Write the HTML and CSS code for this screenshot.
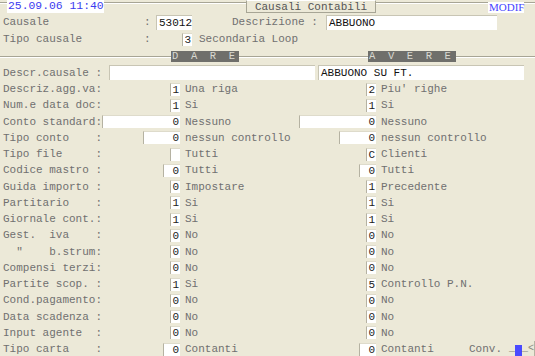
FILE: index.html
```html
<!DOCTYPE html>
<html lang="it">
<head>
  <meta charset="UTF-8" />
  <title>Causali Contabili</title>
  <link rel="stylesheet" href="styles.css">
</head>
<body>
  <div class="screen">
    <div class="topbar">
      <span class="clock">25.09.06 11:40</span>
      <span class="title">Causali Contabili</span>
      <span class="mode">MODIF</span>
    </div>

    <div class="head-row">
      <span class="hlabel">Causale</span>
      <span class="colon">:</span>
      <span class="field code">53012</span>
      <span class="hlabel desc-label">Descrizione :</span>
      <span class="field descr">ABBUONO</span>
    </div>
    <div class="head-row">
      <span class="hlabel">Tipo causale</span>
      <span class="colon">:</span>
      <span class="type-cell"><span class="box w1">3</span></span>
      <span class="text type-desc">Secondaria Loop</span>
    </div>

    <div class="section">
      <span class="tag dare">D  A  R  E</span>
      <span class="tag avere">A  V  E  R  E</span>
    </div>

    <div class="descr-row">
      <span class="label">Descr.causale :</span>
      <span class="field wide left"></span>
      <span class="field wide right">ABBUONO SU FT.</span>
    </div>

    <div class="row">
      <div class="col-a"><span class="label">Descriz.agg.va:</span><span class="box w1">1</span></div>
      <div class="col-b"><span class="text">Una riga</span><span class="box w1">2</span></div>
      <div class="col-c"><span class="text">Piu' righe</span></div>
    </div>
    <div class="row">
      <div class="col-a"><span class="label">Num.e data doc:</span><span class="box w1">1</span></div>
      <div class="col-b"><span class="text">Si</span><span class="box w1">1</span></div>
      <div class="col-c"><span class="text">Si</span></div>
    </div>
    <div class="row">
      <div class="col-a"><span class="label">Conto standard:</span><span class="box w-conto">0</span></div>
      <div class="col-b"><span class="text">Nessuno</span><span class="box w-conto-r">0</span></div>
      <div class="col-c"><span class="text">Nessuno</span></div>
    </div>
    <div class="row">
      <div class="col-a"><span class="label">Tipo conto    :</span><span class="box w-tipo">0</span></div>
      <div class="col-b"><span class="text">nessun controllo</span><span class="box w-tipo">0</span></div>
      <div class="col-c"><span class="text">nessun controllo</span></div>
    </div>
    <div class="row">
      <div class="col-a"><span class="label">Tipo file     :</span><span class="box w1"></span></div>
      <div class="col-b"><span class="text">Tutti</span><span class="box w1">C</span></div>
      <div class="col-c"><span class="text">Clienti</span></div>
    </div>
    <div class="row">
      <div class="col-a"><span class="label">Codice mastro :</span><span class="box w2">0</span></div>
      <div class="col-b"><span class="text">Tutti</span><span class="box w2">0</span></div>
      <div class="col-c"><span class="text">Tutti</span></div>
    </div>
    <div class="row">
      <div class="col-a"><span class="label">Guida importo :</span><span class="box w1">0</span></div>
      <div class="col-b"><span class="text">Impostare</span><span class="box w1">1</span></div>
      <div class="col-c"><span class="text">Precedente</span></div>
    </div>
    <div class="row">
      <div class="col-a"><span class="label">Partitario    :</span><span class="box w1">1</span></div>
      <div class="col-b"><span class="text">Si</span><span class="box w1">1</span></div>
      <div class="col-c"><span class="text">Si</span></div>
    </div>
    <div class="row">
      <div class="col-a"><span class="label">Giornale cont.:</span><span class="box w1">1</span></div>
      <div class="col-b"><span class="text">Si</span><span class="box w1">1</span></div>
      <div class="col-c"><span class="text">Si</span></div>
    </div>
    <div class="row">
      <div class="col-a"><span class="label">Gest.  iva    :</span><span class="box w1">0</span></div>
      <div class="col-b"><span class="text">No</span><span class="box w1">0</span></div>
      <div class="col-c"><span class="text">No</span></div>
    </div>
    <div class="row">
      <div class="col-a"><span class="label">  "    b.strum:</span><span class="box w1">0</span></div>
      <div class="col-b"><span class="text">No</span><span class="box w1">0</span></div>
      <div class="col-c"><span class="text">No</span></div>
    </div>
    <div class="row">
      <div class="col-a"><span class="label">Compensi terzi:</span><span class="box w1">0</span></div>
      <div class="col-b"><span class="text">No</span><span class="box w1">0</span></div>
      <div class="col-c"><span class="text">No</span></div>
    </div>
    <div class="row">
      <div class="col-a"><span class="label">Partite scop. :</span><span class="box w1">1</span></div>
      <div class="col-b"><span class="text">Si</span><span class="box w1">5</span></div>
      <div class="col-c"><span class="text">Controllo P.N.</span></div>
    </div>
    <div class="row">
      <div class="col-a"><span class="label">Cond.pagamento:</span><span class="box w1">0</span></div>
      <div class="col-b"><span class="text">No</span><span class="box w1">0</span></div>
      <div class="col-c"><span class="text">No</span></div>
    </div>
    <div class="row">
      <div class="col-a"><span class="label">Data scadenza :</span><span class="box w1">0</span></div>
      <div class="col-b"><span class="text">No</span><span class="box w1">0</span></div>
      <div class="col-c"><span class="text">No</span></div>
    </div>
    <div class="row">
      <div class="col-a"><span class="label">Input agente  :</span><span class="box w1">0</span></div>
      <div class="col-b"><span class="text">No</span><span class="box w1">0</span></div>
      <div class="col-c"><span class="text">No</span></div>
    </div>
    <div class="row">
      <div class="col-a"><span class="label">Tipo carta    :</span><span class="box w2">0</span></div>
      <div class="col-b"><span class="text">Contanti</span><span class="box w2">0</span></div>
      <div class="col-c">
        <span class="text">Contanti</span>
        <span class="conv">Conv.<span class="conv-slot">_<span class="cursor"></span>_&lt;</span></span>
      </div>
    </div>
  </div>
</body>
</html>
```

FILE: styles.css
```css
* {
  box-sizing: border-box;
}

body {
  margin: 0;
  background: #ece9d8;
  font-family: "Liberation Mono", "DejaVu Sans Mono", monospace;
  font-size: 11px;
  color: #707070;
  overflow: hidden;
}

.screen {
  width: 535px;
  height: 356px;
}

/* top bar */
.topbar {
  height: 14px;
  display: flex;
  align-items: flex-start;
  background: linear-gradient(#a7a595, #a7a595) 0 2px / 100% 1px no-repeat,
              linear-gradient(#fff, #fff) 0 3px / 100% 1px no-repeat;
}

.clock {
  margin-left: 7px;
  width: 97px;
  height: 13px;
  line-height: 13px;
  padding-left: 1px;
  background: #fff;
  color: #3c3cf0;
  font-size: 11.4px;
}

.title {
  margin-left: 142px;
  width: 130px;
  height: 13px;
  line-height: 12px;
  text-align: center;
  background: #ece9d8;
  border: 1px solid #a7a595;
  border-top-color: #fff;
  color: #555;
}

.mode {
  margin-left: 112px;
  margin-top: 2px;
  width: 36px;
  height: 11px;
  line-height: 11px;
  padding-left: 1px;
  background: #fff;
  color: #4646ff;
  font-family: "Liberation Serif", serif;
  font-size: 11px;
}

/* heading rows */
.head-row {
  height: 17px;
  display: flex;
  align-items: center;
  line-height: 17px;
  white-space: pre;
}

.hlabel {
  padding-left: 3px;
  width: 144px;
}

.colon {
  width: 12px;
}

.desc-label {
  margin-left: 40px;
  width: 94px;
  padding-left: 0;
}

.field {
  height: 15px;
  line-height: 15px;
  background: #fff;
  color: #111;
  border-top: 1px solid #c8c5b4;
  border-left: 1px solid #c8c5b4;
  padding-left: 2px;
  white-space: pre;
}

.code {
  width: 36px;
}

.descr {
  width: 171px;
}

.type-cell {
  width: 36px;
  display: flex;
  justify-content: flex-end;
}

.type-desc {
  margin-left: 7px;
}

/* dare / avere */
.section {
  height: 16px;
  display: flex;
  align-items: flex-start;
  padding-top: 3px;
  white-space: pre;
  background: linear-gradient(#a7a595, #a7a595) 0 8px / 100% 1px no-repeat,
              linear-gradient(#fff, #fff) 0 9px / 100% 1px no-repeat;
}

.tag {
  height: 11px;
  line-height: 11px;
  font-size: 10.5px;
  background: #6f6f6b;
  color: #d8d8d0;
  padding-left: 1px;
}

.dare {
  margin-left: 171px;
  width: 68px;
}

.avere {
  margin-left: 129px;
  width: 88px;
}

/* descrizione causale */
.descr-row {
  height: 17px;
  display: flex;
  align-items: center;
  white-space: pre;
}

.descr-row .label {
  padding-left: 3px;
  width: 109px;
}

.wide {
  width: 206px;
}

.wide.right {
  margin-left: 3px;
}

/* main grid */
.row {
  height: 16.25px;
  display: grid;
  grid-template-columns: 180px 196px 159px;
  align-items: center;
  line-height: 16px;
  white-space: pre;
}

.col-a,
.col-b,
.col-c {
  display: flex;
  align-items: center;
  justify-content: space-between;
  height: 16px;
}

.col-a {
  padding-left: 3px;
}

.col-b,
.col-c {
  padding-left: 5px;
}

.col-c {
  justify-content: flex-start;
}

.label,
.text {
  color: #707070;
}

.box {
  height: 13px;
  line-height: 13px;
  background: #fff;
  color: #222;
  text-align: right;
  padding-right: 1px;
  border-left: 1px solid #b5b2a2;
  border-top: 1px solid #dedbcb;
}

.w1 { width: 10px; }
.w2 { width: 17px; }
.w-tipo { width: 37px; }
.w-conto { width: 79px; }
.w-conto-r { width: 77px; }

.conv {
  margin-left: auto;
  display: flex;
  align-items: center;
  color: #707070;
}

.conv-slot {
  display: flex;
  align-items: flex-end;
  justify-content: flex-end;
  color: #8a8a80;
  font-size: 10px;
  width: 33px;
  border-right: 1px solid #b5b2a2;
}

.cursor {
  display: inline-block;
  width: 7px;
  height: 12px;
  background: #4a4aff;
}
```
